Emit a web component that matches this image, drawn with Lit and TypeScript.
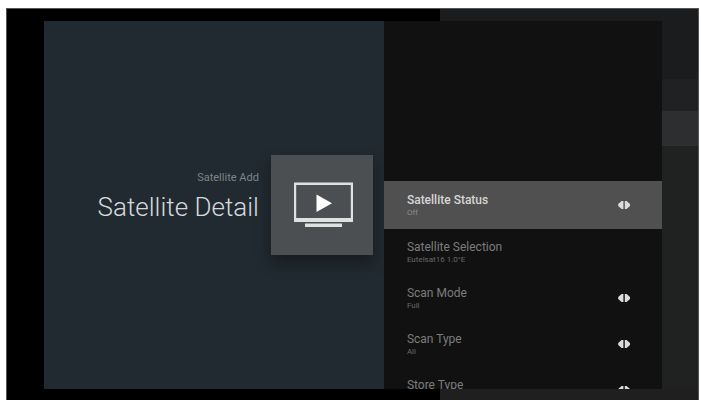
import { LitElement, html, css, svg, nothing } from "lit";
import { customElement, property } from "lit/decorators.js";
import { classMap } from "lit/directives/class-map.js";

interface Setting {
  label: string;
  value: string;
  adjustable: boolean;
}

const SETTINGS: Setting[] = [
  { label: "Satellite Status", value: "Off", adjustable: true },
  { label: "Satellite Selection", value: "Eutelsat16 1.0°E", adjustable: false },
  { label: "Scan Mode", value: "Full", adjustable: true },
  { label: "Scan Type", value: "All", adjustable: true },
  { label: "Store Type", value: "", adjustable: true },
];

@customElement("setting-row")
class SettingRow extends LitElement {
  @property({ attribute: false }) setting!: Setting;
  @property({ type: Boolean }) active = false;

  static styles = css`
    :host {
      display: block;
    }
    .row {
      display: flex;
      align-items: center;
      justify-content: space-between;
      box-sizing: border-box;
      width: 100%;
      height: 46px;
      padding: 0 32px 0 23px;
      border: 0;
      background: transparent;
      color: #7c7c7c;
      font: inherit;
      text-align: left;
    }
    .row.active {
      background: #505050;
      color: #d6d6d6;
      height: 48px;
    }
    .text {
      display: flex;
      flex-direction: column;
      padding-top: 2px;
    }
    .label {
      font-size: 12px;
      line-height: 14px;
    }
    .value {
      min-height: 12px;
      font-size: 8px;
      line-height: 12px;
      color: #686868;
    }
    .active .label {
      font-weight: 500;
    }
    .active .value {
      color: #8c8c8c;
    }
    .arrows {
      display: block;
      width: 12px;
      height: 8px;
      fill: #dcdcdc;
    }
  `;

  render() {
    const { label, value, adjustable } = this.setting;
    return html`
      <button class=${classMap({ row: true, active: this.active })} type="button">
        <span class="text">
          <span class="label">${label}</span>
          <span class="value">${value}</span>
        </span>
        ${adjustable
          ? html`<svg class="arrows" viewBox="0 0 12 8" aria-hidden="true">
              ${svg`<path d="M3.6 0H5.4V8H3.6L0.2 5V3ZM6.8 0H8.6L12 3V5L8.6 8H6.8Z" />`}
            </svg>`
          : nothing}
      </button>
    `;
  }
}

@customElement("app-root")
class AppRoot extends LitElement {
  static styles = css`
    :host {
      display: block;
      box-sizing: border-box;
      height: 100vh;
      padding: 8px 2px 0 6px;
      background: #fff;
      font-family: Roboto, "Liberation Sans", sans-serif;
    }
    .screen {
      display: flex;
      box-sizing: border-box;
      height: 100%;
      padding: 12px 36px 11px 37px;
      border: solid #555;
      border-width: 1px 1px 0;
      background:
        linear-gradient(90deg, #000 62.6%, transparent 62.6%),
        linear-gradient(
          #1b1c1e 18%,
          #202122 18% 26%,
          #2d2e2f 26% 35%,
          #202222 35% 96%,
          #1f1f1f 98%
        );
    }
    .panel {
      display: grid;
      grid-template-columns: 55fr 45fr;
      flex: 1;
      min-height: 0;
      overflow: hidden;
    }
    .guidance {
      display: flex;
      align-items: center;
      justify-content: flex-end;
      gap: 12px;
      padding-right: 11px;
      background: #212a31;
    }
    .heading {
      display: flex;
      flex-direction: column;
      align-items: flex-end;
      padding-bottom: 16px;
    }
    .breadcrumb {
      margin: 0;
      font-size: 11px;
      line-height: 14px;
      color: #7d8489;
    }
    .title {
      margin: 0;
      padding-top: 6px;
      font-size: 26px;
      line-height: 32px;
      font-weight: 300;
      color: #d5d9dc;
      white-space: nowrap;
    }
    .tile {
      display: grid;
      place-items: center;
      flex: none;
      width: 102px;
      height: 100px;
      background: #4c4f51;
      box-shadow: 0 8px 14px rgba(0, 0, 0, 0.35);
    }
    .tv {
      display: block;
      width: 62px;
      height: 46px;
    }
    .settings {
      min-height: 0;
      overflow: hidden;
      padding-top: 160px;
      background: #111;
    }
    .list {
      margin: 0;
      padding: 0;
      list-style: none;
    }
  `;

  render() {
    return html`
      <main class="screen">
        <div class="panel">
          <section class="guidance">
            <div class="heading">
              <p class="breadcrumb">Satellite Add</p>
              <h1 class="title">Satellite Detail</h1>
            </div>
            <div class="tile">
              <svg class="tv" viewBox="0 0 62 46" aria-hidden="true">
                <path fill="#dfe0e0" fill-rule="evenodd" d="M3 0.5H62V40H3ZM5.2 3V36H59.8V3Z" />
                <path fill="#fff" d="M25.5 12.5L41 21.3L25.5 30Z" />
                <path fill="#dfe0e0" d="M14 41.5H51V45H14Z" />
              </svg>
            </div>
          </section>
          <section class="settings">
            <ul class="list">
              ${SETTINGS.map(
                (setting, index) => html`
                  <li><setting-row .setting=${setting} ?active=${index === 0}></setting-row></li>
                `,
              )}
            </ul>
          </section>
        </div>
      </main>
    `;
  }
}
